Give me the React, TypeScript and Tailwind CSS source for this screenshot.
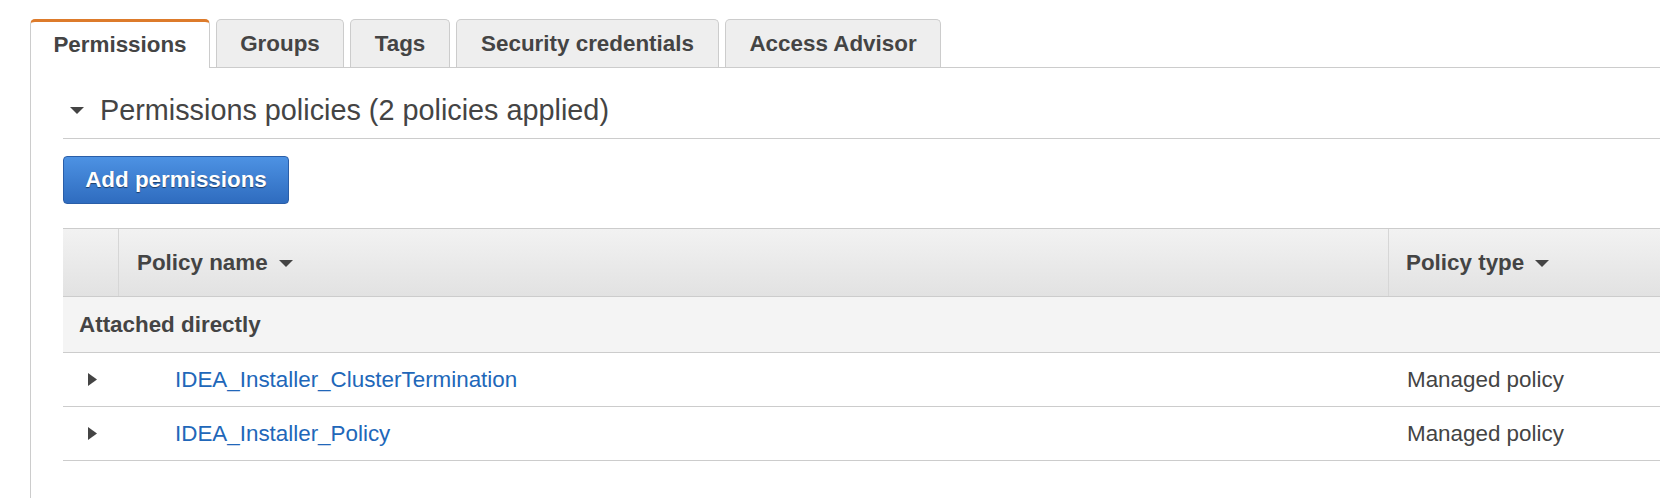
import React from "react";

const tabs = [
  { label: "Permissions", w: "w-[180px]", active: true },
  { label: "Groups", w: "w-[128px]", active: false },
  { label: "Tags", w: "w-[100px]", active: false },
  { label: "Security credentials", w: "w-[263px]", active: false },
  { label: "Access Advisor", w: "w-[216px]", active: false },
];

function DownCaret({ className }: { className?: string }) {
  return (
    <svg className={className} viewBox="0 0 14 7" width="14" height="7">
      <polygon points="0,0 14,0 7,7" fill="#444" />
    </svg>
  );
}

function RightCaret() {
  return (
    <svg viewBox="0 0 9 13" width="9" height="13">
      <polygon points="0,0 9,6.5 0,13" fill="#444" />
    </svg>
  );
}

const rows = ["IDEA_Installer_ClusterTermination", "IDEA_Installer_Policy"];

export default function App() {
  return (
    <div
      className="w-[1660px] h-[498px] overflow-hidden bg-white text-[#444]"
      style={{ fontFamily: '"Liberation Sans", Arial, Helvetica, sans-serif' }}
    >
      <div className="pl-[30px] pt-[19px] flex flex-col h-full">
        {/* Tabs */}
        <div className="flex gap-[6px] border-b border-[#cccccc]">
          {tabs.map((t) =>
            t.active ? (
              <div
                key={t.label}
                className={`${t.w} h-[49px] -mb-px flex items-center justify-center bg-white border-l border-r border-[#cccccc] border-t-[3px] border-t-[#dd7b2b] rounded-t-[5px] text-[22.4px] font-bold`}
              >
                {t.label}
              </div>
            ) : (
              <div
                key={t.label}
                className={`${t.w} h-[48px] flex items-center justify-center bg-[#eeeeee] border-l border-r border-t border-[#cccccc] rounded-t-[5px] text-[22.4px] font-bold`}
              >
                {t.label}
              </div>
            )
          )}
        </div>

        {/* Panel */}
        <div className="flex-1 border-l border-[#cccccc] pl-[32px]">
          {/* Heading */}
          <div className="flex items-center pt-[26px] pb-[11px] border-b border-[#cccccc]">
            <DownCaret className="ml-[7px] mr-[16px]" />
            <h2 className="text-[28.8px] leading-[33px] font-normal">
              Permissions policies (2 policies applied)
            </h2>
          </div>

          {/* Button */}
          <div className="mt-[17px]">
            <button className="w-[226px] h-[48px] rounded-[4px] border border-[#2a5ea8] bg-gradient-to-b from-[#4d92e3] to-[#2f6cbf] text-white text-[22.4px] font-bold [text-shadow:0_1px_1px_rgba(0,0,0,0.5)]">
              Add permissions
            </button>
          </div>

          {/* Table */}
          <div className="mt-[24px] border-t border-[#cccccc]">
            <div className="grid grid-cols-[56px_1270px_1fr] h-[68px] bg-gradient-to-b from-[#f2f2f2] to-[#e2e2e2] border-b border-[#cccccc]">
              <div className="border-r border-[#d6d6d6]" />
              <div className="flex items-center pl-[18px] border-r border-[#d6d6d6] font-bold text-[22.4px]">
                Policy name
                <DownCaret className="ml-[11px] mt-[2px]" />
              </div>
              <div className="flex items-center pl-[17px] font-bold text-[22.4px]">
                Policy type
                <DownCaret className="ml-[11px] mt-[2px]" />
              </div>
            </div>

            <div className="h-[56px] flex items-center pl-[16px] bg-[#f4f4f4] border-b border-[#cccccc] font-bold text-[22.4px]">
              Attached directly
            </div>

            {rows.map((r) => (
              <div
                key={r}
                className="grid grid-cols-[56px_1270px_1fr] h-[54px] border-b border-[#cccccc] text-[22.4px]"
              >
                <div className="flex items-center justify-center pl-[2px]">
                  <RightCaret />
                </div>
                <div className="flex items-center pl-[56px]">
                  <a className="text-[#2167b9]" href="#">
                    {r}
                  </a>
                </div>
                <div className="flex items-center pl-[18px]">Managed policy</div>
              </div>
            ))}
          </div>
        </div>
      </div>
    </div>
  );
}
